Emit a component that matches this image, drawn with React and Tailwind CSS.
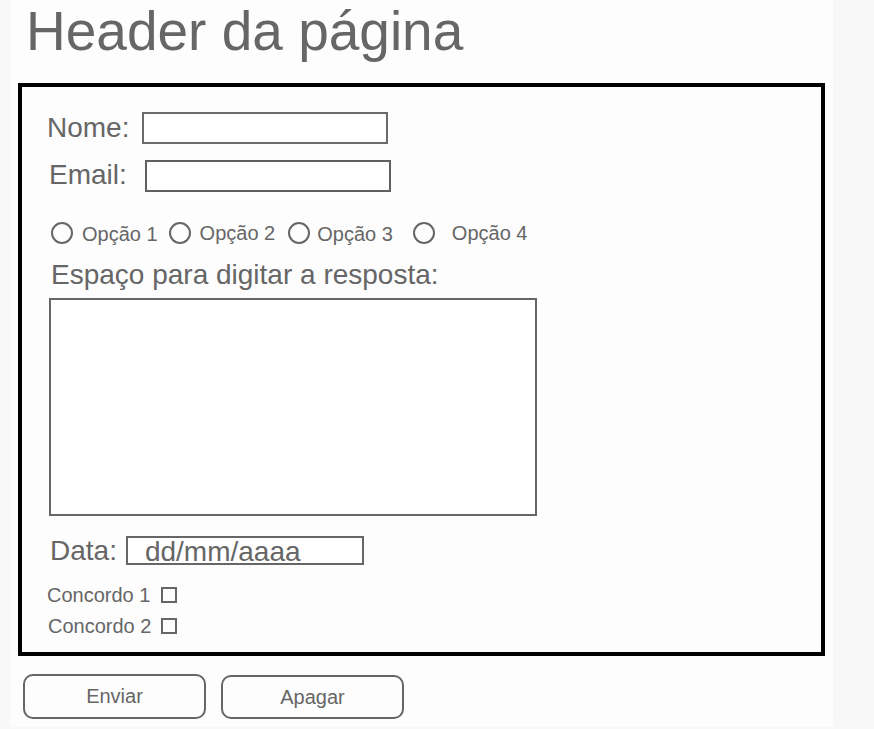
export default function App() {
  const font = { fontFamily: '"Liberation Sans", Arial, sans-serif' };
  return (
    <div className="w-full h-[729px] bg-[#f8f8f8] text-[#666666]" style={font}>
      <div className="ml-[10px] w-[823px] h-[727px] bg-[#fdfdfd] flex flex-col">
        <h1 className="pl-[16px] pt-[4px] text-[55px] leading-[55px] font-normal">Header da página</h1>

        <div className="mt-[24px] ml-[8px] w-[807px] h-[573px] border-4 border-black flex flex-col">
          {/* Nome */}
          <div className="mt-[25px] flex items-center h-[32px]">
            <span className="ml-[25px] text-[28px] leading-[32px]">Nome:</span>
            <div className="ml-[13px] w-[246px] h-[32px] border-2 border-[#6b6b6b] bg-white"></div>
          </div>
          {/* Email */}
          <div className="mt-[16px] flex items-center h-[32px]">
            <span className="ml-[27px] text-[28px] leading-[32px] -mt-[2px]">Email:</span>
            <div className="ml-[18px] w-[246px] h-[32px] border-2 border-[#5f5f5f] bg-white"></div>
          </div>
          {/* Radios */}
          <div className="mt-[30px] flex items-center h-[22px] text-[20px] leading-[22px]">
            <div className="ml-[29px] w-[22px] h-[22px] rounded-full border-2 border-[#666666]"></div>
            <span className="ml-[9px] mt-[2px]">Opção 1</span>
            <div className="ml-[11px] w-[22px] h-[22px] rounded-full border-2 border-[#666666]"></div>
            <span className="ml-[9px] -mt-[1px]">Opção 2</span>
            <div className="ml-[13px] w-[22px] h-[22px] rounded-full border-2 border-[#666666]"></div>
            <span className="ml-[7px] mt-[2px]">Opção 3</span>
            <div className="ml-[20px] w-[22px] h-[22px] rounded-full border-2 border-[#666666]"></div>
            <span className="ml-[17px]">Opção 4</span>
          </div>
          {/* Espaço */}
          <div className="mt-[15px] ml-[29px] text-[28px] leading-[32px]">Espaço para digitar a resposta:</div>
          <div className="mt-[7px] ml-[27px] w-[488px] h-[218px] border-2 border-[#666666] bg-white"></div>
          {/* Data */}
          <div className="mt-[20px] flex items-center h-[29px]">
            <span className="ml-[28px] text-[28px] leading-[32px]">Data:</span>
            <div className="ml-[9px] w-[238px] h-[29px] border-2 border-[#666666] bg-white text-[28px] leading-[28px] pl-[17px] overflow-visible">dd/mm/aaaa</div>
          </div>
          {/* Concordo */}
          <div className="mt-[22px] flex items-center h-[16px] text-[20px] leading-[22px]">
            <span className="ml-[25px]">Concordo 1</span>
            <div className="ml-[11px] w-[16px] h-[16px] border-2 border-[#666666]"></div>
          </div>
          <div className="mt-[15px] flex items-center h-[16px] text-[20px] leading-[22px]">
            <span className="ml-[26px]">Concordo 2</span>
            <div className="ml-[10px] w-[16px] h-[16px] border-2 border-[#666666]"></div>
          </div>
        </div>

        <div className="mt-[18px] ml-[13px] flex items-start">
          <div className="w-[183px] h-[45px] rounded-[10px] border-2 border-[#666666] flex items-center justify-center text-[20px] leading-[22px]">
            <span className="-mt-[1px]">Enviar</span>
          </div>
          <div className="ml-[15px] mt-[1px] w-[183px] h-[44px] rounded-[10px] border-2 border-[#666666] flex items-center justify-center text-[20px] leading-[22px]">
            <span>Apagar</span>
          </div>
        </div>
      </div>
    </div>
  );
}
